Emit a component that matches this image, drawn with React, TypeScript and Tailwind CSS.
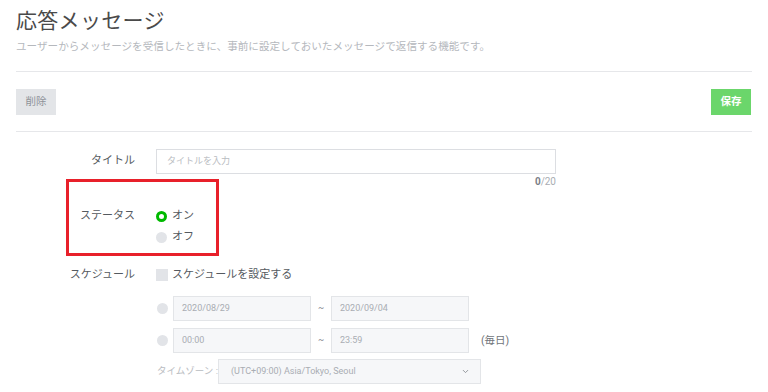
import { ChevronDown } from "lucide-react";

const font = { fontFamily: 'Roboto, "Noto Sans CJK JP", sans-serif' };

function Radio({ checked }: { checked?: boolean }) {
  return checked ? (
    <span className="inline-block w-[11px] h-[11px] rounded-full border-[3px] border-[#00b900] bg-white shrink-0" />
  ) : (
    <span className="inline-block w-[11px] h-[11px] rounded-full bg-[#e2e4e8] shrink-0" />
  );
}

function TextBox({ value, className = "" }: { value: string; className?: string }) {
  return (
    <div
      className={`h-[25px] border border-[#e3e5e8] bg-[#f6f7f9] flex items-center px-2 text-[9px] text-[#a9adb3] ${className}`}
    >
      {value}
    </div>
  );
}

export default function App() {
  return (
    <div className="w-[768px] h-[392px] bg-white overflow-hidden px-4" style={font}>
      {/* header */}
      <h1 className="pt-[7px] text-[21px] leading-[28px] text-[#4a4a4a] tracking-[0.3px]">応答メッセージ</h1>
      <p className="mt-[5px] text-[10.6px] leading-[14px] text-[#b5b8bd]">
        ユーザーからメッセージを受信したときに、事前に設定しておいたメッセージで返信する機能です。
      </p>
      <div className="mt-[17px] h-px bg-[#e6e7ea] w-[736px]" />

      {/* actions */}
      <div className="flex justify-between items-center w-[735px] mt-[17px]">
        <button className="w-[40px] h-[26px] bg-[#e3e5e8] text-[10.5px] text-[#8e9298]">削除</button>
        <button className="w-[40px] h-[26px] bg-[#6bd66b] text-[10.5px] text-white font-bold">保存</button>
      </div>
      <div className="mt-[16px] h-px bg-[#e6e7ea] w-[736px]" />

      {/* form */}
      <div className="relative pt-[17px] text-[11px] text-[#555a60]">
        <div className="flex items-center">
          <div className="w-[119px] text-right">タイトル</div>
          <div className="ml-[21px] w-[400px] h-[25px] border border-[#dcdee2] flex items-center px-[10px] text-[9px] text-[#b9bcc1]">
            タイトルを入力
          </div>
        </div>
        <div className="w-[540px] text-right text-[10px] leading-[14px] mt-[1px] text-[#a9adb3]">
          <span className="font-bold text-[#7b8087]">0</span>/20
        </div>

        <div className="flex mt-[19px]">
          <div className="w-[119px] text-right leading-[16px]">ステータス</div>
          <div className="ml-[21px] flex flex-col gap-[5px]">
            <label className="flex items-center gap-[5px] leading-[16px]">
              <Radio checked />
              オン
            </label>
            <label className="flex items-center gap-[5px] leading-[16px]">
              <Radio />
              オフ
            </label>
          </div>
        </div>

        <div className="flex items-center mt-[22px]">
          <div className="w-[119px] text-right leading-[16px]">スケジュール</div>
          <label className="ml-[21px] flex items-center gap-[4px] leading-[16px]">
            <span className="w-[12px] h-[12px] bg-[#e2e4e8] inline-block" />
            スケジュールを設定する
          </label>
        </div>

        <div className="ml-[141px] mt-[13px] flex flex-col gap-[7px]">
          <div className="flex items-center">
            <Radio />
            <TextBox value="2020/08/29" className="ml-[5px] w-[138px]" />
            <span className="w-[20px] text-center text-[9px] text-[#7b8087]">~</span>
            <TextBox value="2020/09/04" className="w-[138px]" />
          </div>
          <div className="flex items-center">
            <Radio />
            <TextBox value="00:00" className="ml-[5px] w-[138px]" />
            <span className="w-[20px] text-center text-[9px] text-[#7b8087]">~</span>
            <TextBox value="23:59" className="w-[138px]" />
            <span className="ml-[12px] text-[10.5px] text-[#6f747a]">(毎日)</span>
          </div>
          <div className="flex items-center -mt-px">
            <span className="text-[9.5px] text-[#b9bcc1] w-[61px]">タイムゾーン :</span>
            <div className="w-[263px] h-[25px] border border-[#e3e5e8] bg-[#f6f7f9] flex items-center justify-between pl-[12px] pr-[10px] text-[9px] text-[#a9adb3]">
              (UTC+09:00) Asia/Tokyo, Seoul
              <ChevronDown className="w-[9px] h-[9px] text-[#8e9298]" strokeWidth={2.5} />
            </div>
          </div>
        </div>

        {/* annotation */}
        <div className="absolute left-[50px] top-[47px] w-[153px] h-[77px] border-[3px] border-[#e8202a]" />
      </div>
    </div>
  );
}
